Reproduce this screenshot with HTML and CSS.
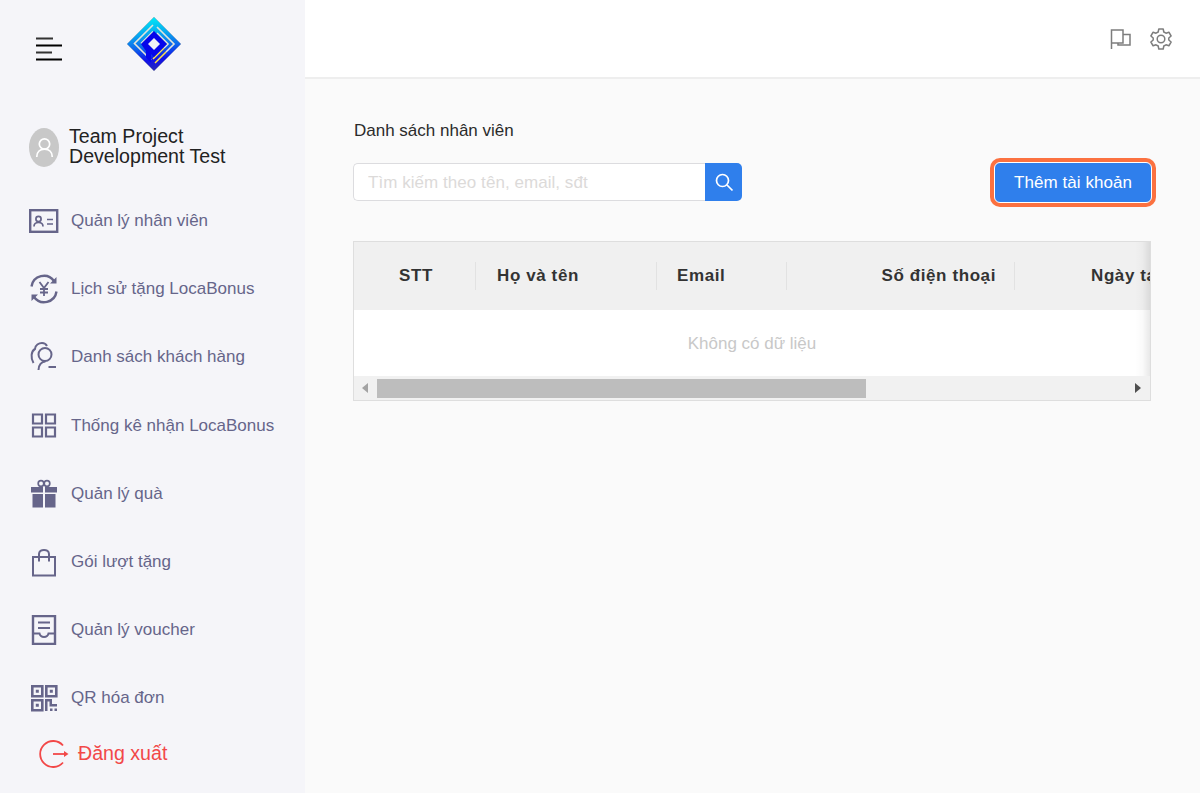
FILE: index.html
```html
<!DOCTYPE html>
<html lang="vi">
<head>
<meta charset="utf-8">
<title>Danh sách nhân viên</title>
<link rel="stylesheet" href="styles.css">
</head>
<body>
<div class="app">
  <aside class="sidebar">
    <div class="brand">
      <svg class="burger" width="28" height="24" viewBox="0 0 28 24"><path d="M1 1.500h17M1 15.500h16" stroke="#333" stroke-width="1.800" fill="none"/><path d="M1 8.500h26M1 22.500h26" stroke="#000" stroke-width="1.800" fill="none"/></svg>
      <svg class="logo" width="56" height="56" viewBox="0 0 56 56">
        <defs>
          <linearGradient id="lg" gradientUnits="userSpaceOnUse" x1="24" y1="2" x2="30" y2="54">
            <stop offset="0" stop-color="#00e8f4"/><stop offset="0.3" stop-color="#08a8f0"/><stop offset="0.55" stop-color="#0c68ec"/><stop offset="0.8" stop-color="#1010ea"/><stop offset="1" stop-color="#2a28b8"/>
          </linearGradient>
        </defs>
        <path d="M28 1 55 28 28 55 1 28Z" fill="url(#lg)" stroke="#8a90a8" stroke-width=".8" stroke-opacity=".5"/>
        <path d="M27 9 8.500 27.500 25 44M27 15.500 15 27.500" fill="none" stroke="#e4e4da" stroke-width="1.600"/>
        <path d="M31 11 48 28 40 36M31 17 42 28 38 32" fill="none" stroke="#e4e4da" stroke-width="1.600"/>
        <path d="M40 36 29 47M38 32 27 43" fill="none" stroke="#ffe14a" stroke-width="1.500"/>
        <path d="M28 15 41 28 28 41 25 38V46.500L20 41.500V35L15 28Z" fill="#0606ea"/>
        <path d="M28 22 34 28 28 34 22 28Z" fill="#f0f1f6"/>
      </svg>
    </div>
    <div class="account">
      <span class="avatar"><svg width="22" height="24" viewBox="0 0 22 24"><circle cx="11" cy="8" r="6" fill="none" stroke="#fff" stroke-width="2"/><path d="M2 23c0-6 4-9 9-9s9 3 9 9" fill="none" stroke="#fff" stroke-width="2"/></svg></span>
      <span class="account-name">Team Project<br>Development Test</span>
    </div>
    <nav class="menu">
      <a class="menu-item">
        <svg class="ico ico-card" viewBox="0 0 30 24"><rect x="1.200" y="1.200" width="27" height="21.600" fill="none" stroke="#66658a" stroke-width="2.400"/><circle cx="9.500" cy="10" r="2.600" fill="none" stroke="#66658a" stroke-width="1.700"/><path d="M5 17.500c0-2.500 2-4 4.500-4s4.500 1.500 4.500 4M18 10.500h6M18 15h6" fill="none" stroke="#66658a" stroke-width="1.700"/></svg>
        <span>Quản lý nhân viên</span>
      </a>
      <a class="menu-item">
        <svg class="ico" viewBox="0 0 30 30"><path d="M2.500 12.500A12.500 12.500 0 0 1 25 7M27.500 17.500A12.500 12.500 0 0 1 5 23" fill="none" stroke="#66658a" stroke-width="2.400"/><path d="M27.500 3v6.500H21zM2.500 27v-6.500H9z" fill="#66658a"/><path d="M10.500 8l4.500 6 4.500-6M15 14v8M11 15h8M11 18.500h8" fill="none" stroke="#66658a" stroke-width="1.800"/></svg>
        <span>Lịch sử tặng LocaBonus</span>
      </a>
      <a class="menu-item">
        <svg class="ico" viewBox="0 0 30 30"><circle cx="16" cy="12.500" r="6.500" fill="none" stroke="#66658a" stroke-width="2"/><path d="M4.500 21C1.500 16 2 9 6 7 6 3 10 1 13 1c2 0 4 1 5 3M9.500 28c0-5 3-8.500 7-8.500M19.500 25H27" fill="none" stroke="#66658a" stroke-width="2"/></svg>
        <span>Danh sách khách hàng</span>
      </a>
      <a class="menu-item">
        <svg class="ico" viewBox="0 0 30 30"><path d="M4 3.500h9v9H4zM17 3.500h9v9h-9zM4 16.500h9v9H4zM17 16.500h9v9h-9z" fill="none" stroke="#66658a" stroke-width="2.200"/></svg>
        <span>Thống kê nhận LocaBonus</span>
      </a>
      <a class="menu-item">
        <svg class="ico" viewBox="0 0 30 30"><path d="M2 8h12v5.500H2zM16 8h12v5.500H16zM3.500 15H14v13.500H3.500zM16 15h10.500v13.500H16z" fill="#66658a"/><circle cx="12" cy="4.500" r="2.800" fill="none" stroke="#66658a" stroke-width="1.700"/><circle cx="18" cy="4.500" r="2.800" fill="none" stroke="#66658a" stroke-width="1.700"/></svg>
        <span>Quản lý quà</span>
      </a>
      <a class="menu-item">
        <svg class="ico" viewBox="0 0 30 30"><path d="M4 10h22v18.500H4zM10 14.500V7c0-5.500 10-5.500 10 0v7.500" fill="none" stroke="#66658a" stroke-width="2"/></svg>
        <span>Gói lượt tặng</span>
      </a>
      <a class="menu-item">
        <svg class="ico" viewBox="0 0 30 30"><path d="M4 1h22v28H4z" fill="none" stroke="#66658a" stroke-width="2.400"/><path d="M9 7.500h12M9 13h12" stroke="#66658a" stroke-width="2"/><path d="M4 18.500h6.500c1 4.500 8 4.500 9 0H26" fill="none" stroke="#66658a" stroke-width="2"/></svg>
        <span>Quản lý voucher</span>
      </a>
      <a class="menu-item">
        <svg class="ico" viewBox="0 0 30 30"><path d="M3.300 3.300h10v10h-10zM17.300 3.300h10v10h-10zM3.300 17.300h10v10h-10z" fill="none" stroke="#66658a" stroke-width="2.600"/><path d="M6.800 6.800h3v3h-3zM20.800 6.800h3v3h-3zM6.800 20.800h3v3h-3z" fill="#66658a"/><path d="M16 16h7v5h5v2.500h-7.500v-5H18.500V28H16zM21 25.500h2.500V28H21zM25.500 25.500H28V28h-2.500z" fill="#66658a"/></svg>
        <span>QR hóa đơn</span>
      </a>
    </nav>
    <a class="logout">
      <svg width="30" height="30" viewBox="0 0 30 30"><path d="M24 6.500A13 13 0 1 0 24 23.500" fill="none" stroke="#f24848" stroke-width="1.800"/><path d="M14 15h12" stroke="#f24848" stroke-width="1.800"/><path d="M25 12 29.500 15 25 18z" fill="#f24848"/></svg>
      <span>Đăng xuất</span>
    </a>
  </aside>
  <div class="main">
    <header class="topbar">
      <svg width="24" height="24" viewBox="0 0 24 24"><path d="M2.500 22V3H14V16H2.500M14 7.500h7V18H9V16" fill="none" stroke="#7d7d7d" stroke-width="1.500"/></svg>
      <svg width="24" height="24" viewBox="0 0 24 24" fill="none" stroke="#7d7d7d" stroke-width="1.500"><circle cx="12" cy="12" r="3.800"/><path d="M9.800 2h4.400l.6 3 2.200 1.200 2.900-1 2.200 3.800-2.300 2v2l2.300 2-2.200 3.800-2.900-1-2.200 1.200-.6 3H9.800l-.6-3L7 17.800l-2.900 1L1.900 15l2.300-2v-2L1.900 9l2.200-3.800 2.900 1L9.200 5z" stroke-linejoin="round"/></svg>
    </header>
    <main class="content">
      <h1 class="page-title">Danh sách nhân viên</h1>
      <div class="toolbar">
        <div class="search">
          <input class="search-input" type="text" placeholder="Tìm kiếm theo tên, email, sđt">
          <button class="search-btn" type="button"><svg width="20" height="20" viewBox="0 0 20 20"><circle cx="8.500" cy="8.500" r="6" fill="none" stroke="#fff" stroke-width="1.700"/><path d="M13 13l5.500 5.500" stroke="#fff" stroke-width="1.700"/></svg></button>
        </div>
        <button class="add-btn" type="button">Thêm tài khoản</button>
      </div>
      <section class="table">
        <div class="table-clip">
          <div class="thead">
            <div class="th th-stt">STT</div>
            <div class="th th-name">Họ và tên</div>
            <div class="th th-email">Email</div>
            <div class="th th-phone">Số điện thoại</div>
            <div class="th th-date">Ngày tạo</div>
          </div>
          <div class="empty">Không có dữ liệu</div>
          <div class="fade"></div>
        </div>
        <div class="scrollbar">
          <span class="arrow arrow-left"></span>
          <span class="track"><span class="thumb"></span></span>
          <span class="arrow arrow-right"></span>
        </div>
      </section>
    </main>
  </div>
</div>
</body>
</html>
```
FILE: styles.css
```css
* { box-sizing: border-box; }
html, body { margin: 0; height: 100%; }
body { font-family: "Liberation Sans", Arial, sans-serif; overflow: hidden; }
.app { display: flex; width: 1200px; height: 793px; }

.sidebar { width: 305px; flex: none; background: #f5f5f9; padding: 0 0 0 29px; display: flex; flex-direction: column; }
.brand { height: 127px; display: flex; align-items: flex-start; padding-top: 16px; padding-left: 6px; }
.burger { margin-top: 21px; }
.logo { margin-left: 63px; filter: blur(.35px); }
.account { display: flex; align-items: center; gap: 10px; height: 40px; }
.avatar { width: 30px; height: 39px; border-radius: 50%; background: #c8c8c8; display: flex; align-items: center; justify-content: center; }
.avatar svg { width: 19px; height: 21px; }
.account-name { font-size: 19.6px; line-height: 20px; color: #222; padding-bottom: 2px; }
.menu { display: flex; flex-direction: column; margin-top: 20px; }
.menu-item { height: 68.2px; display: flex; align-items: center; gap: 12px; font-size: 17px; color: #66658a; }
.ico { width: 30px; height: 30px; flex: none; }
.ico-card { height: 24px; }
.logout { display: flex; align-items: center; gap: 9px; margin-top: 6px; padding-left: 10px; font-size: 19.6px; color: #f24848; }

.main { flex: 1; display: flex; flex-direction: column; background: #fafafa; min-width: 0; }
.topbar { height: 79px; background: #fff; border-bottom: 2px solid #eee; display: flex; justify-content: flex-end; align-items: flex-start; gap: 16px; padding: 27px 27px 0 0; }
.content { padding: 42px 49px 0 48px; }
.page-title { margin: 0; padding-left: 1px; font-size: 17px; font-weight: 400; line-height: 20px; color: #2b2b2b; }
.toolbar { display: flex; justify-content: space-between; align-items: flex-start; margin-top: 21px; }
.search { display: flex; width: 389px; height: 38px; margin-top: 1px; }
.search-input { flex: 1; min-width: 0; height: 38px; border: 1px solid #dcdcdf; border-right: 0; border-radius: 5px 0 0 5px; background: #fff; padding: 1px 14px 0; font: 17px "Liberation Sans", Arial, sans-serif; letter-spacing: .05px; color: #333; outline: none; }
.search-input::placeholder { color: #dcdad9; opacity: 1; }
.search-btn { width: 37px; height: 38px; border: 0; border-radius: 0 5px 5px 0; background: #2f7fec; padding: 0; display: flex; align-items: center; justify-content: center; }
.add-btn { width: 158px; height: 41px; margin-right: -1px; border: 1px solid #fff; border-radius: 6px; background: #2f7fec; color: #fff; font: 17px "Liberation Sans", Arial, sans-serif; letter-spacing: .07px; box-shadow: 0 0 0 4px #fb7140; }

.table { margin-top: 38px; width: 798px; height: 160px; border: 1px solid #dedede; background: #fff; display: flex; flex-direction: column; }
.table-clip { position: relative; flex: 1; overflow: hidden; }
.thead { display: flex; height: 68px; background: #f0f0f0; width: 1100px; }
.th { position: relative; height: 68px; line-height: 68px; font-size: 17px; font-weight: 700; letter-spacing: .6px; color: #333; white-space: nowrap; flex: none; }
.th::after { content: ""; position: absolute; right: 0; top: 20px; height: 28px; width: 1px; background: #e2e2e2; }
.th-date::after { display: none; }
.th-stt { width: 122px; padding-left: 45px; }
.th-name { width: 181px; padding-left: 21px; }
.th-email { width: 130px; padding-left: 20px; }
.th-phone { width: 228px; padding-right: 19px; text-align: right; }
.th-date { width: 200px; padding-left: 76px; }
.empty { height: 67px; line-height: 68px; text-align: center; font-size: 17px; color: #c8c8c8; }
.fade { position: absolute; top: 0; right: 0; width: 15px; height: 100%; background: linear-gradient(to right, rgba(0,0,0,0), rgba(0,0,0,.02) 50%, rgba(0,0,0,.09)); }
.scrollbar { height: 24px; background: #f1f1f1; display: flex; align-items: center; flex: none; }
.arrow { width: 0; height: 0; flex: none; border-top: 5px solid transparent; border-bottom: 5px solid transparent; }
.arrow-left { margin-left: 8px; border-right: 6px solid #a3a3a3; }
.arrow-right { margin-right: 9px; border-left: 6px solid #4f4f4f; }
.track { flex: 1; height: 19px; margin: 0 9px; }
.thumb { display: block; width: 489px; height: 19px; background: #bdbdbd; }
```
